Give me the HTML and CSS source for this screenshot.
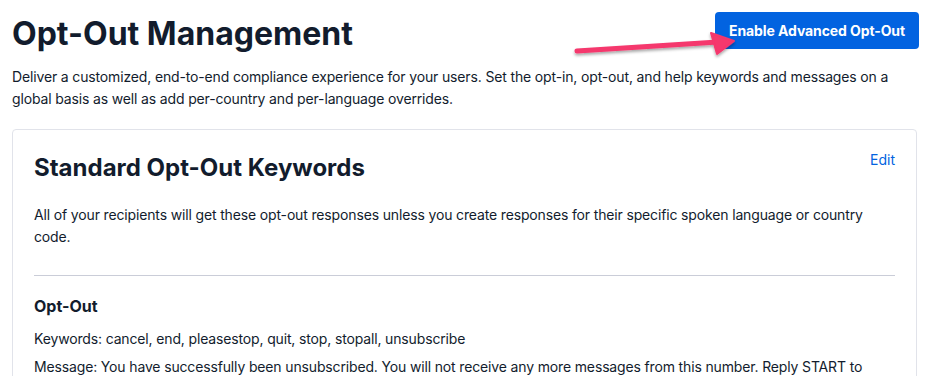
FILE: index.html
```html
<!DOCTYPE html>
<html lang="en">
<head>
    <meta charset="UTF-8">
    <meta name="viewport" content="width=device-width, initial-scale=1.0">
    <title>Opt-Out Management</title>
    <link rel="stylesheet" href="styles.css">
</head>
<body>
    <div class="page">
        <div class="page-header">
            <h1>Opt-Out Management</h1>
            <button class="primary-button">Enable Advanced Opt-Out</button>
            <svg class="callout-arrow" width="180" height="44" viewBox="0 0 180 44">
                <defs>
                    <filter id="arrow-shadow" x="-10%" y="-50%" width="120%" height="200%">
                        <feDropShadow dx="0" dy="2" stdDeviation="1.5" flood-color="#000" flood-opacity="0.35"/>
                    </filter>
                </defs>
                <g filter="url(#arrow-shadow)" fill="#f5376d" stroke="#f5376d" stroke-linecap="round" stroke-linejoin="round">
                    <line x1="11" y1="29" x2="152" y2="20" stroke-width="5"/>
                    <path d="M145 11 L168 19 L151 32 Z" stroke-width="2"/>
                </g>
            </svg>
        </div>

        <p class="page-description">
            Deliver a customized, end-to-end compliance experience for your users. Set the opt-in, opt-out, and help keywords and messages on a global basis as well as add per-country and per-language overrides.
        </p>

        <div class="card">
            <div class="card-header">
                <h2>Standard Opt-Out Keywords</h2>
                <a href="#" class="edit-link">Edit</a>
            </div>
            <p class="card-text">
                All of your recipients will get these opt-out responses unless you create responses for their specific spoken language or country code.
            </p>
            <hr class="divider">
            <h3>Opt-Out</h3>
            <p class="card-text">Keywords: cancel, end, pleasestop, quit, stop, stopall, unsubscribe</p>
            <p class="card-text">Message: You have successfully been unsubscribed. You will not receive any more messages from this number. Reply START to resubscribe.</p>
        </div>
    </div>
</body>
</html>
```

FILE: styles.css
```css
body {
    margin: 0;
    font-family: Inter, 'Noto Sans', sans-serif;
    color: #121c2d;
    background-color: white;
}
.page {
    padding: 12px 11px 0 12px;
}
.page-header {
    position: relative;
    display: flex;
    justify-content: space-between;
    align-items: flex-start;
}
h1 {
    margin: 2px 0 0;
    font-size: 32px;
    line-height: 40px;
    font-weight: 700;
}
.primary-button {
    margin-right: -2px;
    background-color: #0263e0;
    color: white;
    border: none;
    border-radius: 4px;
    padding: 0 14px;
    height: 37px;
    font-family: inherit;
    font-size: 14px;
    font-weight: 700;
    letter-spacing: -0.1px;
    cursor: pointer;
}
.callout-arrow {
    position: absolute;
    left: 554px;
    top: 10px;
}
.page-description {
    margin: 12px 0 19px;
    font-size: 14px;
    line-height: 22px;
    letter-spacing: -0.15px;
}
.card {
    border: 1px solid #e1e3ea;
    border-radius: 4px;
    padding: 18px 21px 0;
    height: 260px;
    overflow: hidden;
}
.card-header {
    display: flex;
    justify-content: space-between;
    align-items: flex-start;
}
h2 {
    margin: 4px 0 0;
    font-size: 24px;
    line-height: 32px;
    font-weight: 700;
}
.edit-link {
    margin-top: 2px;
    color: #0263e0;
    text-decoration: none;
    font-size: 14px;
    line-height: 20px;
}
.card-text {
    margin: 0 0 6px;
    font-size: 14px;
    line-height: 22px;
    letter-spacing: -0.15px;
}
.card-header + .card-text {
    margin-top: 20px;
}
.divider {
    border: none;
    border-top: 1px solid #cacdd8;
    margin: 27px 0 18px;
}
h3 {
    margin: 0 0 10px;
    font-size: 16px;
    line-height: 24px;
    font-weight: 700;
}
```
